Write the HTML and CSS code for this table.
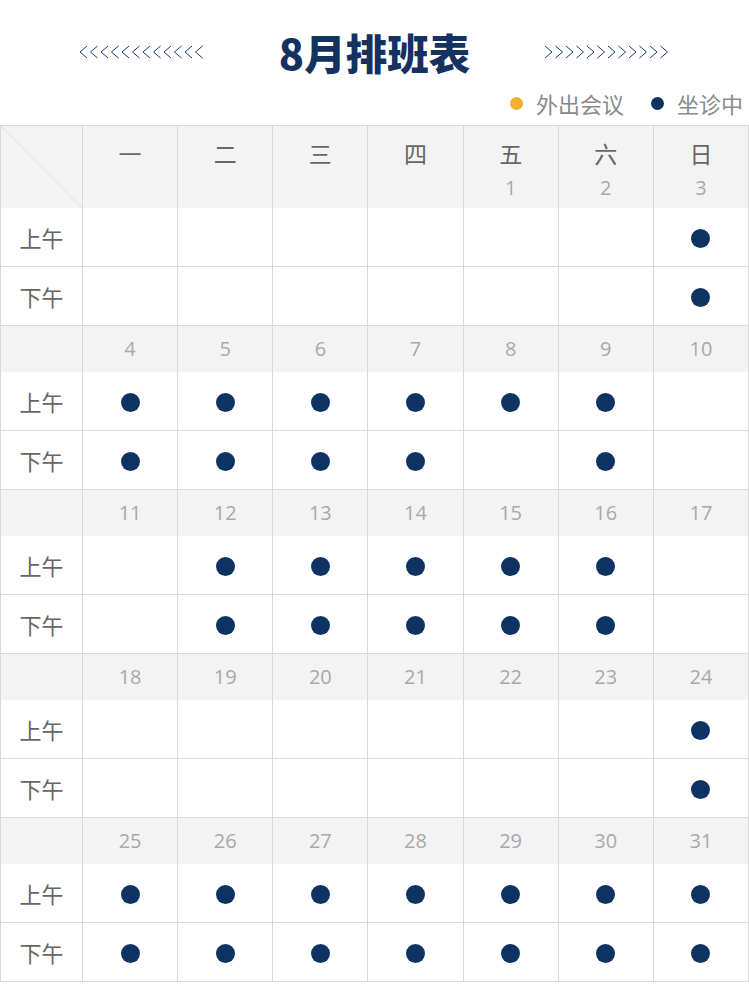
FILE: index.html
```html
<!DOCTYPE html>
<html lang="zh-CN">
<head>
<meta charset="utf-8">
<title>8月排班表</title>
<link rel="stylesheet" href="styles.css">
</head>
<body>
<header class="top">
  <div class="title-row">
    <svg class="chev" width="126" height="14" viewBox="0 0 126 14"><path d="M8 1L1 7L8 13M18.5 1L11.5 7L18.5 13M29 1L22 7L29 13M39.5 1L32.5 7L39.5 13M50 1L43 7L50 13M60.5 1L53.5 7L60.5 13M71 1L64 7L71 13M81.5 1L74.5 7L81.5 13M92 1L85 7L92 13M102.5 1L95.5 7L102.5 13M113 1L106 7L113 13M123.5 1L116.5 7L123.5 13"/></svg>
    <h1 class="title">8月排班表</h1>
    <svg class="chev" width="126" height="14" viewBox="0 0 126 14"><path d="M1 1L8 7L1 13M11.5 1L18.5 7L11.5 13M22 1L29 7L22 13M32.5 1L39.5 7L32.5 13M43 1L50 7L43 13M53.5 1L60.5 7L53.5 13M64 1L71 7L64 13M74.5 1L81.5 7L74.5 13M85 1L92 7L85 13M95.5 1L102.5 7L95.5 13M106 1L113 7L106 13M116.5 1L123.5 7L116.5 13"/></svg>
  </div>
  <div class="legend">
    <span class="legend-item"><span class="ldot ldot-out"></span>外出会议</span>
    <span class="legend-item"><span class="ldot ldot-in"></span>坐诊中</span>
  </div>
</header>
<table class="sched">
  <colgroup><col class="c-label"><col><col><col><col><col><col><col></colgroup>
  <tr class="head">
    <td class="corner"></td>
    <td><div class="wd">一</div></td>
    <td><div class="wd">二</div></td>
    <td><div class="wd">三</div></td>
    <td><div class="wd">四</div></td>
    <td><div class="wd">五</div><div class="hd">1</div></td>
    <td><div class="wd">六</div><div class="hd">2</div></td>
    <td><div class="wd">日</div><div class="hd">3</div></td>
  </tr>
  <tr class="am"><td class="lbl">上午</td><td></td><td></td><td></td><td></td><td></td><td></td><td><span class="dot"></span></td></tr>
  <tr class="pm"><td class="lbl">下午</td><td></td><td></td><td></td><td></td><td></td><td></td><td><span class="dot"></span></td></tr>

  <tr class="dates"><td></td><td>4</td><td>5</td><td>6</td><td>7</td><td>8</td><td>9</td><td>10</td></tr>
  <tr class="am"><td class="lbl">上午</td><td><span class="dot"></span></td><td><span class="dot"></span></td><td><span class="dot"></span></td><td><span class="dot"></span></td><td><span class="dot"></span></td><td><span class="dot"></span></td><td></td></tr>
  <tr class="pm"><td class="lbl">下午</td><td><span class="dot"></span></td><td><span class="dot"></span></td><td><span class="dot"></span></td><td><span class="dot"></span></td><td></td><td><span class="dot"></span></td><td></td></tr>

  <tr class="dates"><td></td><td>11</td><td>12</td><td>13</td><td>14</td><td>15</td><td>16</td><td>17</td></tr>
  <tr class="am"><td class="lbl">上午</td><td></td><td><span class="dot"></span></td><td><span class="dot"></span></td><td><span class="dot"></span></td><td><span class="dot"></span></td><td><span class="dot"></span></td><td></td></tr>
  <tr class="pm"><td class="lbl">下午</td><td></td><td><span class="dot"></span></td><td><span class="dot"></span></td><td><span class="dot"></span></td><td><span class="dot"></span></td><td><span class="dot"></span></td><td></td></tr>

  <tr class="dates"><td></td><td>18</td><td>19</td><td>20</td><td>21</td><td>22</td><td>23</td><td>24</td></tr>
  <tr class="am"><td class="lbl">上午</td><td></td><td></td><td></td><td></td><td></td><td></td><td><span class="dot"></span></td></tr>
  <tr class="pm"><td class="lbl">下午</td><td></td><td></td><td></td><td></td><td></td><td></td><td><span class="dot"></span></td></tr>

  <tr class="dates"><td></td><td>25</td><td>26</td><td>27</td><td>28</td><td>29</td><td>30</td><td>31</td></tr>
  <tr class="am"><td class="lbl">上午</td><td><span class="dot"></span></td><td><span class="dot"></span></td><td><span class="dot"></span></td><td><span class="dot"></span></td><td><span class="dot"></span></td><td><span class="dot"></span></td><td><span class="dot"></span></td></tr>
  <tr class="pm"><td class="lbl">下午</td><td><span class="dot"></span></td><td><span class="dot"></span></td><td><span class="dot"></span></td><td><span class="dot"></span></td><td><span class="dot"></span></td><td><span class="dot"></span></td><td><span class="dot"></span></td></tr>
</table>
</body>
</html>
```

FILE: styles.css
```css
* { box-sizing: border-box; }
html, body { margin: 0; padding: 0; background: #fff; }
body {
  font-family: "Open Sans", "Noto Sans CJK SC", sans-serif;
  color: #666;
  width: 749px;
}
.top { display: block; }
.title-row {
  display: flex;
  justify-content: center;
  align-items: center;
  gap: 74px;
  height: 48px;
  margin-top: 28px;
}
.chev { display: block; flex: none; }
.chev path { fill: none; stroke: #1b3a6b; stroke-width: 1; }
.title {
  margin: 0;
  font-family: "Noto Sans CJK SC", sans-serif;
  font-weight: 900;
  font-size: 41.5px;
  line-height: 48px;
  color: #14315f;
  letter-spacing: 0;
}
.legend {
  display: flex;
  justify-content: flex-end;
  align-items: center;
  gap: 27px;
  height: 24px;
  margin-top: 15px;
  margin-bottom: 10px;
  padding-right: 6px;
  font-family: "Noto Sans CJK SC", sans-serif;
  font-size: 22px;
  color: #8a8a8a;
}
.legend-item { display: flex; align-items: center; gap: 13px; line-height: 24px; }
.ldot { width: 13px; height: 13px; border-radius: 50%; display: block; }
.ldot-out { background: #efb12e; }
.ldot-in { background: #0e3262; }

.sched {
  width: 749px;
  table-layout: fixed;
  border-collapse: collapse;
  border: 1px solid #d9d9d9;
}
.c-label { width: 82px; }
.sched td {
  border-left: 1px solid #d9d9d9;
  border-right: 1px solid #d9d9d9;
  padding: 0;
  text-align: center;
  vertical-align: middle;
}
.head td {
  background: #f3f3f3;
  height: 82px;
  vertical-align: top;
  padding-top: 12px;
}
.corner {
  background: linear-gradient(to top right, #f3f3f3 calc(50% - 0.6px), #dcdcdc 50%, #f3f3f3 calc(50% + 0.6px)) !important;
}
.wd {
  font-family: "Noto Sans CJK SC", sans-serif;
  font-size: 23px;
  line-height: 30px;
  color: #666;
}
.hd {
  margin-top: 6px;
  font-size: 20px;
  line-height: 28px;
  color: #a9a9a9;
}
.dates td {
  background: #f3f3f3;
  height: 46px;
  font-size: 20px;
  color: #a9a9a9;
}
.am td { height: 59px; border-bottom: 1px solid #d9d9d9; }
.pm td { height: 59px; border-bottom: 1px solid #d9d9d9; }
.lbl {
  font-family: "Noto Sans CJK SC", sans-serif;
  font-size: 22px;
  color: #666;
}
.dot {
  display: inline-block;
  width: 19px;
  height: 19px;
  border-radius: 50%;
  background: #0e3262;
  vertical-align: middle;
}
```
